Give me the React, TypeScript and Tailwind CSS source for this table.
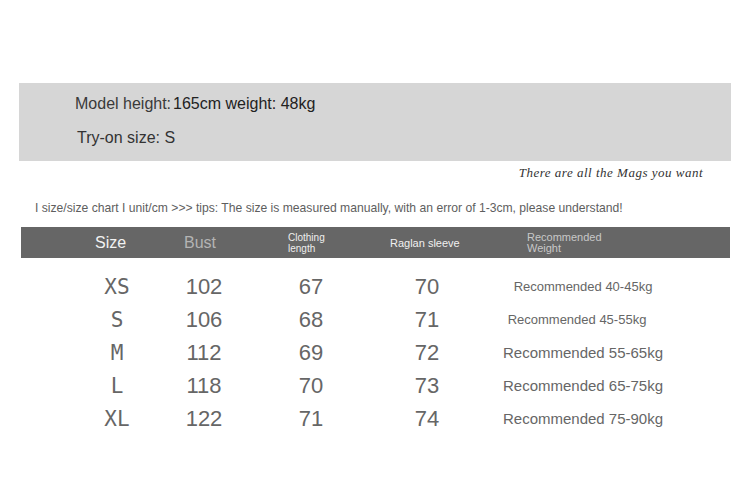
import React from "react";

const rows = [
  { s: "XS", b: "102", c: "67", r: "70", w: "Recommended 40-45kg", small: true, shift: "" },
  { s: "S", b: "106", c: "68", r: "71", w: "Recommended 45-55kg", small: true, shift: "pr-[12px]" },
  { s: "M", b: "112", c: "69", r: "72", w: "Recommended 55-65kg", small: false, shift: "" },
  { s: "L", b: "118", c: "70", r: "73", w: "Recommended 65-75kg", small: false, shift: "" },
  { s: "XL", b: "122", c: "71", r: "74", w: "Recommended 75-90kg", small: false, shift: "" },
];

export default function App() {
  return (
    <div className="w-[750px] h-[480px] bg-white overflow-hidden font-['Liberation_Sans',Arial,sans-serif]">
      <div className="h-[83px]" />
      <div className="mx-[19px] h-[78px] bg-[#d6d6d6] flex flex-col pl-[56px] pt-[11px]">
        <div className="text-[16px] leading-[20px] text-[#3a3a3a] flex items-baseline">
          <span>Model height:</span>
          <span className="ml-[2px] text-[#222]">165cm weight: 48kg</span>
        </div>
        <div className="mt-[14px] ml-[2px] text-[16px] leading-[20px] text-[#333]">Try-on size: S</div>
      </div>
      <div className="flex justify-end pr-[47px] mt-[4px] h-[16px]">
        <span className="font-['Liberation_Serif',serif] italic text-[13px] leading-[16px] text-[#333] tracking-[0.5px]">
          There are all the Mags you want
        </span>
      </div>
      <div className="pl-[35px] mt-[20px] text-[12.15px] leading-[14px] text-[#5e5e5e]">
        I size/size chart I unit/cm &gt;&gt;&gt; tips: The size is measured manually, with an error of 1-3cm, please understand!
      </div>
      <div className="mx-[21px] mt-[12px] w-[709px] h-[31px] bg-[#666666] flex items-center pl-[74px]">
        <div className="w-[89px] text-[16px] text-[#f2f2f2] leading-[18px]">Size</div>
        <div className="w-[104px] text-[16px] text-[#b4b4b4] leading-[18px]">Bust</div>
        <div className="w-[102px] text-[10px] leading-[11px] text-[#eeeeee]">
          Clothing
          <br />
          length
        </div>
        <div className="w-[137px] text-[11px] leading-[12px] text-[#f0f0f0]">Raglan sleeve</div>
        <div className="text-[11px] leading-[11px] text-[#c8c8c8]">
          Recommended
          <br />
          Weight
        </div>
      </div>
      <div className="mt-[12px] ml-[67px] flex flex-col">
        {rows.map((r) => (
          <div key={r.s} className="flex h-[33px] items-center text-[#666]">
            <div className="w-[100px] text-center font-['DejaVu_Sans_Mono',monospace] text-[21px] leading-[24px]">{r.s}</div>
            <div className="w-[74px] text-center text-[22px] leading-[24px]">{r.b}</div>
            <div className="w-[140px] text-center text-[22px] leading-[24px]">{r.c}</div>
            <div className="w-[92px] text-center text-[22px] leading-[24px]">{r.r}</div>
            <div className={`w-[220px] text-center ${r.shift} ${r.small ? "text-[13px]" : "text-[15px]"} leading-[18px] text-[#666]`}>
              {r.w}
            </div>
          </div>
        ))}
      </div>
    </div>
  );
}
